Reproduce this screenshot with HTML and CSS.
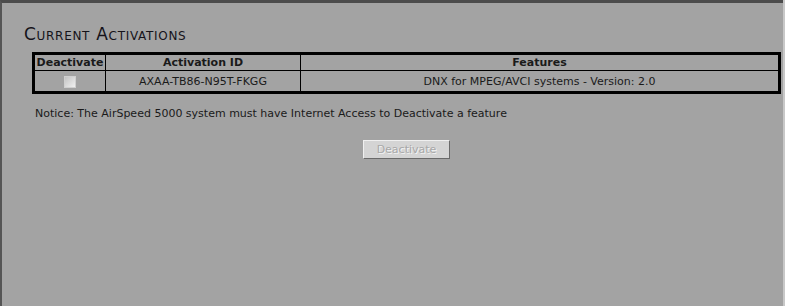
FILE: index.html
```html
<!DOCTYPE html>
<html lang="en">
<head>
    <meta charset="UTF-8">
    <title>Current Activations</title>
    <link rel="stylesheet" href="styles.css">
</head>
<body>
    <div class="frame">
        <h2 class="title">Current Activations</h2>
        <table class="activations">
            <tr>
                <th class="col-check">Deactivate</th>
                <th class="col-id">Activation ID</th>
                <th>Features</th>
            </tr>
            <tr class="data-row">
                <td><span class="checkbox"></span></td>
                <td>AXAA-TB86-N95T-FKGG</td>
                <td>DNX for MPEG/AVCI systems - Version: 2.0</td>
            </tr>
        </table>
        <p class="notice">Notice: The AirSpeed 5000 system must have Internet Access to Deactivate a feature</p>
        <div class="actions">
            <button class="btn" disabled>Deactivate</button>
        </div>
    </div>
</body>
</html>
```

FILE: styles.css
```css
html, body {
    margin: 0;
    height: 100%;
    overflow: hidden;
}
body {
    box-sizing: border-box;
    width: 785px;
    background-color: #a3a3a3;
    border-right: 2px solid #c8c8c8;
    font-family: 'DejaVu Sans', Verdana, sans-serif;
    font-size: 11px;
    color: #1a1a1a;
}
.frame {
    box-sizing: border-box;
    height: 306px;
    border-top: 3px solid #4c4c4c;
    border-left: 2px solid #555;
    padding: 0 2px 0 22px;
}
.title {
    margin: 0;
    padding-top: 21px;
    font-family: 'DejaVu Sans', Verdana, sans-serif;
    font-variant: small-caps;
    font-weight: normal;
    font-size: 17px;
    letter-spacing: 0.7px;
    line-height: 20px;
    color: #15131a;
}
.activations {
    margin: 8px 0 0 8px;
    width: 749px;
    border-collapse: collapse;
    border: 3px solid #000;
}
.activations th,
.activations td {
    border: 1px solid #000;
    text-align: center;
    padding: 0;
    color: #1a1a1a;
    font-size: 11px;
}
.activations th {
    height: 15px;
    font-weight: bold;
}
.col-check {
    width: 70px;
}
.col-id {
    width: 194px;
}
.data-row td {
    height: 20px;
}
.checkbox {
    display: inline-block;
    vertical-align: middle;
    width: 10px;
    height: 10px;
    border: 1px solid #d0d0d0;
    background: linear-gradient(135deg, #c4c4c4, #f0f0f0);
}
.notice {
    margin: 13px 0 0 11px;
    line-height: 14px;
}
.actions {
    margin-top: 19px;
    padding-left: 339px;
}
.btn {
    width: 87px;
    height: 19px;
    padding: 0;
    font-family: 'DejaVu Sans', Verdana, sans-serif;
    font-size: 11px;
    background-color: #d4d4d4;
    color: #a8a8a8;
    text-shadow: 1px 1px 0 #f2f2f2;
    border: 1px solid;
    border-color: #f0f0f0 #6a6a6a #6a6a6a #f0f0f0;
}
```
